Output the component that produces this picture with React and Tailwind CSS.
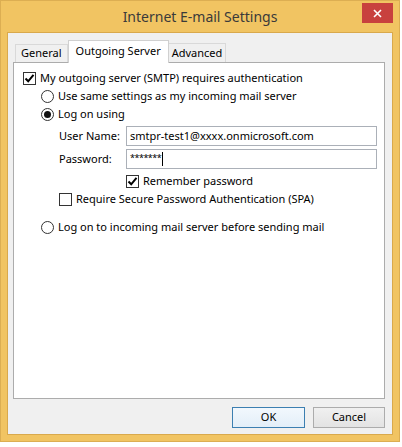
import { useState } from 'react';

function CheckBox({ checked }) {
  return (
    <span className="w-[13px] h-[13px] shrink-0 border border-[#333] bg-white flex items-center justify-center">
      {checked && (
        <svg width="11" height="11" viewBox="0 0 11 11">
          <path d="M1.5 5.5 L4.2 8.3 L9.5 1.8" fill="none" stroke="#000" strokeWidth="2" />
        </svg>
      )}
    </span>
  );
}

function Radio({ checked }) {
  return (
    <span className="w-[13px] h-[13px] shrink-0 rounded-full border border-[#333] bg-white flex items-center justify-center">
      {checked && <span className="w-[7px] h-[7px] rounded-full bg-[#111]" />}
    </span>
  );
}

export default function App() {
  const [remember] = useState(true);

  return (
    <div className="w-[402px] h-[447px] bg-white overflow-hidden" style={{ fontFamily: '"Noto Sans", "Open Sans", sans-serif' }}>
      <div className="w-[400px] h-[442px] bg-[#f1c462] border border-[#dcae52] flex flex-col px-[6px] pb-[6px]">
        {/* title bar */}
        <div className="h-[31px] grid grid-cols-[1fr_auto_1fr] items-start">
          <div />
          <div className="pt-[6px] text-[14px] leading-[20px] text-[#3a3a3a]">Internet E-mail Settings</div>
          <div className="justify-self-end pt-[2px]">
            <div className="w-[31px] h-[20px] bg-[#c8413e] flex items-center justify-center">
              <svg width="9" height="9" viewBox="0 0 9 9">
                <path d="M1 1 L8 8 M8 1 L1 8" stroke="#fff" strokeWidth="1.6" />
              </svg>
            </div>
          </div>
        </div>

        {/* dialog body */}
        <div className="flex-1 bg-[#f0f0f0] border border-[#d9a94c] flex flex-col pl-[5px] pr-[7px] pt-[7px] pb-[6px] text-[11px] text-black">
          {/* tabs */}
          <div className="flex items-end h-[22px] pl-[2px]">
            <div className="h-[18px] px-[5px] border border-b-0 border-[#d9d9d9] bg-[#f0f0f0] flex items-center">General</div>
            <div className="h-[23px] px-[7px] border border-b-0 border-[#d0d0d0] bg-white flex items-start pt-[2px] -mb-[1px] relative z-10">Outgoing Server</div>
            <div className="h-[19px] px-[3px] border border-b-0 border-l-0 border-[#d9d9d9] bg-[#f0f0f0] flex items-center">Advanced</div>
          </div>

          {/* panel */}
          <div className="flex-1 bg-white border border-[#acacac] flex flex-col pl-[9px] pt-[7px]">
            <div className="h-[17px] flex items-center gap-[4px]">
              <CheckBox checked />
              <span>My outgoing server (SMTP) requires authentication</span>
            </div>
            <div className="h-[18px] flex items-center gap-[4px] pl-[18px]">
              <Radio />
              <span>Use same settings as my incoming mail server</span>
            </div>
            <div className="h-[18px] flex items-center gap-[4px] pl-[18px]">
              <Radio checked />
              <span>Log on using</span>
            </div>

            <div className="mt-[3px] h-[20px] flex items-center pl-[36px]">
              <span className="w-[67px]">User Name:</span>
              <div className="w-[251px] h-[20px] border border-[#abb0b8] flex items-center pl-[3px]">smtpr-test1@xxxx.onmicrosoft.com</div>
            </div>
            <div className="mt-[3px] h-[20px] flex items-center pl-[36px]">
              <span className="w-[67px]">Password:</span>
              <div className="w-[251px] h-[20px] border border-[#abb0b8] flex items-center pl-[3px]">
                <span className="text-[9px] leading-[10px] -mt-[3px] tracking-[-0.5px]">*******</span>
                <span className="w-px h-[14px] bg-black ml-[1px]" />
              </div>
            </div>

            <div className="mt-[4px] h-[16px] flex items-center gap-[4px] pl-[103px]">
              <CheckBox checked={remember} />
              <span>Remember password</span>
            </div>
            <div className="mt-[2px] h-[16px] flex items-center gap-[4px] pl-[36px]">
              <CheckBox />
              <span>Require Secure Password Authentication (SPA)</span>
            </div>
            <div className="mt-[11px] h-[18px] flex items-center gap-[4px] pl-[18px]">
              <Radio />
              <span>Log on to incoming mail server before sending mail</span>
            </div>
          </div>

          {/* buttons */}
          <div className="flex justify-end gap-[8px] pt-[8px]">
            <button className="w-[73px] h-[21px] border border-[#3c7fb1] bg-gradient-to-b from-[#f2f8fd] to-[#e3eef8] text-[11px]">OK</button>
            <button className="w-[72px] h-[21px] border border-[#acacac] bg-gradient-to-b from-[#f0f0f0] to-[#e3e3e3] text-[11px]">Cancel</button>
          </div>
        </div>
      </div>
    </div>
  );
}
